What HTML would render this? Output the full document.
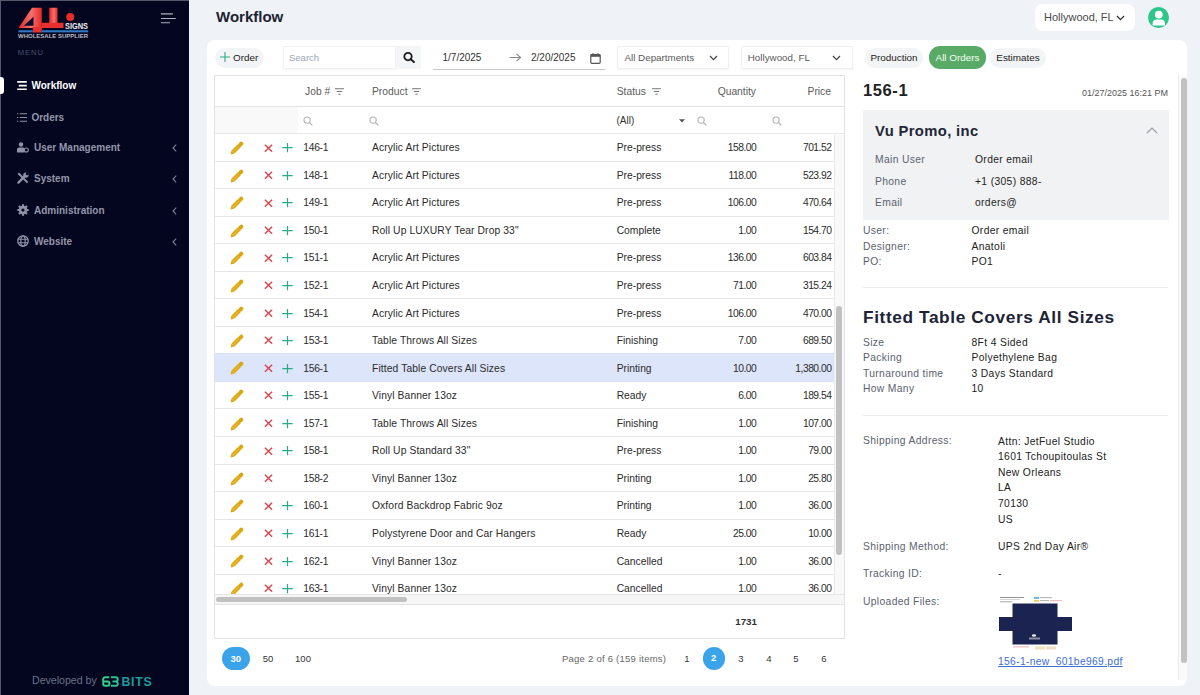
<!DOCTYPE html>
<html><head><meta charset="utf-8"><title>Workflow</title>
<style>
*{box-sizing:border-box;margin:0;padding:0}
html,body{width:1200px;height:695px;overflow:hidden}
body{background:#eff2f7;font-family:"Liberation Sans",sans-serif;position:relative;color:#2a2a2a}
.abs{position:absolute}
/* sidebar */
#sb{position:absolute;left:0;top:0;width:189px;height:695px;background:#04061f;border-left:1px solid #55576b;border-top:1px solid #55576b}
#sb .logo{position:absolute}
#sb .ham{position:absolute;left:159px;top:10.5px}
#sb .menu{position:absolute;left:16.8px;top:47.3px;font-size:7.6px;letter-spacing:0.95px;color:#4b4e72}
.nav{position:absolute;left:0;height:18px;width:189px;font-size:10px;color:#9496ab;font-weight:bold;line-height:18px}
.nav .t{position:absolute;left:30.4px;top:0}
.nav .i{position:absolute;left:16px;top:4px}
.nav .ch{position:absolute;left:171px;top:5px}
.nav.act{color:#fff}
.nav.act .bar{position:absolute;left:-1px;top:0;width:3.5px;height:17px;background:#fff;border-radius:0 3px 3px 0}
#dev{position:absolute;left:31px;top:673px;font-size:10.6px;color:#6e7187;white-space:nowrap}
/* header */
#title{position:absolute;left:216px;top:8px;font-size:15px;font-weight:bold;color:#1d2230}
#loc{position:absolute;left:1035px;top:4px;width:100px;height:27px;background:#fff;border-radius:7px;box-shadow:0 0 1px rgba(0,0,0,.06)}
#loc .t{position:absolute;left:9px;top:7px;font-size:11px;color:#4a4a4a}
#loc svg{position:absolute;left:81px;top:11px}
#av{position:absolute;left:1147.5px;top:6.5px;width:21.5px;height:21.5px;border-radius:50%;background:#2dc68b;overflow:hidden}
/* card */
#card{position:absolute;left:207px;top:40px;width:980px;height:646px;background:#fff;border-radius:8px}
/* toolbar */
.pill{position:absolute;top:47.5px;height:20.5px;border-radius:11px;background:#f3f4f6;font-size:9.9px;color:#222;line-height:20.5px;text-align:center}
#search{position:absolute;left:283px;top:46px;width:113px;height:23px;background:#fff;border:1px solid #f0f0f2;border-radius:2px;box-shadow:0 1px 2px rgba(0,0,0,.04)}
#search .t{position:absolute;left:5px;top:4.8px;font-size:9.5px;color:#9ba6ba}
#sbtn{position:absolute;left:396px;top:46px;width:25px;height:23px;background:#f4f5f7}
#dates{position:absolute;left:433px;top:46px;width:172px;height:23.5px;border-bottom:1.3px solid #c9c9c9}
#dates .t{position:absolute;top:6px;font-size:10px;color:#333}
.dd{position:absolute;top:46px;height:23px;background:#fff;border:1px solid #eeeff2;border-radius:2px;box-shadow:0 1px 2px rgba(0,0,0,.04)}
.dd .t{position:absolute;left:7px;top:5.2px;font-size:9.8px;color:#5a5a5a}
.dd svg{position:absolute;top:8px}
/* table */
#tbl{position:absolute;left:213.5px;top:75px;width:631.5px;height:564px;border:1px solid #e3e3e3;overflow:hidden;background:#fff}
#thead{position:absolute;left:0;top:0;width:100%;height:31px;border-bottom:1px solid #e3e3e3}
#thead span{position:absolute;top:9.5px;font-size:10.3px;color:#5b5b5b}
#thead svg{position:absolute;top:12px}
#tfilt{position:absolute;left:0;top:31px;width:100%;height:27px;border-bottom:1px solid #e8e8e8}
#tfilt .g{position:absolute;left:0;top:0;width:83px;height:26px;background:#f9f9f9}
#tfilt svg{position:absolute;top:9px}
#tfilt .all{position:absolute;left:402px;top:7.5px;font-size:10px;color:#333}
.rows{position:absolute;left:0;top:0;width:619px;height:593px}
.row{position:absolute;left:0;width:619px;height:27.5px;border-bottom:1px solid #e6e6e6;font-size:10.3px;color:#2b2b2b;background:#fff}
.row.sel{background:#dce5f9;border-bottom-color:#d9e3f7;box-shadow:0 -1px 0 #d6e0f4,0 1px 0 #dfe7f9}
.row span{position:absolute;top:8.3px;white-space:nowrap}
.row .ic-pen{left:15.2px;top:7px;line-height:0}
.row .ic-x{left:49.8px;top:9.5px;line-height:0}
.row .ic-pl{left:67.5px;top:9.3px;line-height:0}
.row .c-job{left:88.8px;letter-spacing:-0.3px}
.row .c-prod{left:157.5px;letter-spacing:0.1px}
.row .c-st{left:402.2px}
.row .c-qty{right:77.3px;letter-spacing:-0.5px}
.row .c-pr{right:2.1px;letter-spacing:-0.5px}
#vtrack{position:absolute;left:619px;top:59px;width:12px;height:459px;background:#f9f9f9;border-left:1px solid #e9e9e9}
#vthumb{position:absolute;left:621.9px;top:229.6px;width:5.5px;height:249px;border-radius:3px;background:#c1c1c1}
#htrack{position:absolute;left:0;top:517.5px;width:631px;height:11px;background:#f6f6f6;border-top:1px solid #e6e6e6;border-bottom:1px solid #e3e3e3}
#hthumb{position:absolute;left:1.8px;top:520.6px;width:191px;height:5.5px;border-radius:3px;background:#c1c1c1}
#tfoot{position:absolute;left:0;top:529px;width:100%;height:34px}
#tfoot .t{position:absolute;right:87px;top:11px;font-size:9.8px;font-weight:bold;color:#333}
/* pager */
.pg{position:absolute;top:647px;height:23px;font-size:9.5px;color:#333;line-height:23px;text-align:center}
.pg.on{background:#3aa3e9;color:#fff;border-radius:50%;font-weight:bold}
/* detail */
#det{position:absolute;left:852px;top:75px;width:335px;height:605px;overflow:hidden}
#det .h1{position:absolute;left:11px;top:6px;font-size:16.5px;letter-spacing:0.6px;font-weight:bold;color:#222}
#det .date{position:absolute;right:19px;top:13px;font-size:9px;color:#555}
#cust{position:absolute;left:11px;top:35px;width:305.5px;height:109.5px;background:#f1f2f3}
#cust .n{position:absolute;left:12px;top:12.5px;font-size:14.8px;letter-spacing:0.35px;font-weight:bold;color:#1f2637}
.kv{position:absolute;font-size:10.3px;letter-spacing:0.35px;white-space:nowrap}
.kv .k{position:absolute;left:0;color:#5b6270}
.kv .v{position:absolute;color:#222}
.sep{position:absolute;left:11px;width:305px;height:1px;background:#ececec}
#dscroll{position:absolute;left:1178px;top:75px;width:9px;height:605px;border-left:1px solid #ececec;background:#fafafa}
#dthumb{position:absolute;left:1181px;top:78px;width:5.5px;height:585px;border-radius:3px;background:#c1c1c1}

</style></head>
<body>
<div id="sb">
  <svg class="logo" width="74" height="34" viewBox="0 0 74 34" style="left:16px;top:4px">
    <defs><linearGradient id="rg" x1="0" x2="1" y1="0" y2="0"><stop offset="0" stop-color="#e8231f"/><stop offset="0.55" stop-color="#f47070"/><stop offset="1" stop-color="#e82a25"/></linearGradient></defs>
    <polygon points="1.5,23 15,2.75 24.75,2.75 24.75,23" fill="url(#rg)"/>
    <polygon points="6.75,20.75 16.5,11.75 16.5,20.75" fill="#0b0d2a"/>
    <rect x="15.75" y="22" width="9" height="5.5" fill="#e8302f"/>
    <rect x="32.25" y="2.75" width="8.25" height="20.25" fill="url(#rg)"/>
    <rect x="24.75" y="17.75" width="21.75" height="5.25" fill="#e8302f"/>
    <circle cx="53.25" cy="12.1" r="4" fill="#e82c2a"/>
    <text x="48" y="23.75" font-size="9.3" font-weight="bold" fill="#eceef3" font-family="Liberation Sans" textLength="23" lengthAdjust="spacingAndGlyphs">SIGNS</text>
    <rect x="1.5" y="25.25" width="14.25" height="2.1" fill="#2f78c4"/>
    <rect x="24.75" y="25.25" width="46.5" height="2.1" fill="#2f78c4"/>
    <text x="1" y="32.6" font-size="5.6" font-weight="bold" fill="#b9bdc8" font-family="Liberation Sans" textLength="70" lengthAdjust="spacingAndGlyphs">WHOLESALE SUPPLIER</text>
  </svg>
  <svg class="ham" width="17" height="12" viewBox="0 0 17 12"><path d="M1 1.9 H12.9 M1 6.5 H15.8 M1 10.8 H10" stroke="#aeb0be" stroke-width="1.1"/></svg>
  <div class="menu">MENU</div>
  <div class="nav act" style="top:76px"><span class="bar"></span>
    <svg class="i" width="11" height="10" viewBox="0 0 11 10" style="left:16px;top:4.2px"><path d="M0.2 0.9 H9.8 M1.8 4.6 H9.8 M0.2 8.3 H9.8" stroke="#fff" stroke-width="1.6"/></svg>
    <span class="t">Workflow</span></div>
  <div class="nav" style="top:107.5px">
    <svg class="i" width="11" height="10" viewBox="0 0 11 10" style="left:16px;top:4.3px"><path d="M0 0.8 H1.3 M2.8 0.8 H10 M0 4.5 H1.3 M2.8 4.5 H10 M0 8.2 H1.3 M2.8 8.2 H10" stroke="#8f92a7" stroke-width="1.1"/></svg>
    <span class="t">Orders</span></div>
  <div class="nav" style="top:138px">
    <svg class="i" width="12" height="11" viewBox="0 0 12 11" style="top:2.6px"><circle cx="4" cy="2.5" r="2.2" fill="#8f92a7"/><path d="M0 10.5 V7.5 Q0 5.6 2 5.6 H6 Q7.5 5.6 7.5 7 V10.5 Z" fill="#8f92a7"/><circle cx="9.3" cy="8" r="2" fill="none" stroke="#8f92a7" stroke-width="1.1"/></svg>
    <span class="t" style="left:33px">User Management</span>
    <svg class="ch" width="5" height="8" viewBox="0 0 5 8"><path d="M4.2 0.7 L1 4 L4.2 7.3" fill="none" stroke="#7d8096" stroke-width="1.1"/></svg></div>
  <div class="nav" style="top:169px">
    <svg class="i" width="12" height="12" viewBox="0 0 12 12" style="top:2.3px"><path d="M1.3 1.3 L10.6 10.6" stroke="#8f92a7" stroke-width="2"/><path d="M1.4 10.6 L7.6 4.4" stroke="#8f92a7" stroke-width="2.3" stroke-linecap="round"/><circle cx="8.9" cy="3.1" r="2.7" fill="#8f92a7"/><circle cx="10.2" cy="1.8" r="1.5" fill="#04061f"/></svg>
    <span class="t" style="left:33px">System</span>
    <svg class="ch" width="5" height="8" viewBox="0 0 5 8"><path d="M4.2 0.7 L1 4 L4.2 7.3" fill="none" stroke="#7d8096" stroke-width="1.1"/></svg></div>
  <div class="nav" style="top:200.5px">
    <svg class="i" width="12" height="12" viewBox="0 0 12 12" style="top:2.3px"><circle cx="6" cy="6" r="4.2" fill="#8f92a7"/><path d="M6 0.3 V11.7 M0.3 6 H11.7 M2 2 L10 10 M10 2 L2 10" stroke="#8f92a7" stroke-width="2.2"/><circle cx="6" cy="6" r="1.6" fill="#04061f"/></svg>
    <span class="t" style="left:33px">Administration</span>
    <svg class="ch" width="5" height="8" viewBox="0 0 5 8"><path d="M4.2 0.7 L1 4 L4.2 7.3" fill="none" stroke="#7d8096" stroke-width="1.1"/></svg></div>
  <div class="nav" style="top:231.5px">
    <svg class="i" width="12" height="12" viewBox="0 0 12 12" style="top:2.3px"><circle cx="6" cy="6" r="5.2" fill="none" stroke="#8f92a7" stroke-width="1.3"/><ellipse cx="6" cy="6" rx="2.2" ry="5.2" fill="none" stroke="#8f92a7" stroke-width="1.2"/><path d="M0.8 4.2 H11.2 M0.8 7.8 H11.2" stroke="#8f92a7" stroke-width="1.1"/></svg>
    <span class="t" style="left:33px">Website</span>
    <svg class="ch" width="5" height="8" viewBox="0 0 5 8"><path d="M4.2 0.7 L1 4 L4.2 7.3" fill="none" stroke="#7d8096" stroke-width="1.1"/></svg></div>
  <div id="dev">Developed by <svg width="17" height="11" viewBox="0 0 17 11" style="position:absolute;left:70px;top:2px"><path d="M7.2 1.3 H3.2 Q1.2 1.3 1.2 3.3 V7.7 Q1.2 9.7 3.2 9.7 H5.5 Q7.5 9.7 7.5 7.7 Q7.5 5.5 5.5 5.5 H1.5" fill="none" stroke="#2fcf8e" stroke-width="1.9"/><path d="M9 1.3 H13.8 Q15.8 1.3 15.8 3.3 Q15.8 5.5 13.6 5.5 H10.5 M13.6 5.5 Q15.8 5.5 15.8 7.7 Q15.8 9.7 13.8 9.7 H9" fill="none" stroke="#2bc18f" stroke-width="1.9"/></svg><span style="position:absolute;left:89.5px;top:0.8px;color:#1f9c9a;font-size:12.3px;font-weight:bold;letter-spacing:0.7px">BITS</span></div>
</div>

<div id="title">Workflow</div>
<div id="loc"><span class="t">Hollywood, FL</span><svg width="9" height="6" viewBox="0 0 9 6"><path d="M1 1 L4.5 4.6 L8 1" fill="none" stroke="#333" stroke-width="1.3"/></svg></div>
<div id="av"><svg width="22" height="22" viewBox="0 0 22 22"><circle cx="10.8" cy="7.6" r="3.9" fill="#fff"/><path d="M4.6 18.6 V16.6 Q4.6 13.2 8.2 12.6 H13.4 Q17 13.2 17 16.6 V18.6 Z" fill="#fff"/></svg></div>

<div id="card"></div>

<div class="pill" style="left:215px;top:47.5px;width:48.5px;text-align:left"><svg width="10" height="10" viewBox="0 0 10 10" style="position:absolute;left:5px;top:4.3px"><path d="M5 0 V10 M0 5 H10" stroke="#2bac85" stroke-width="1.1"/></svg><span style="position:absolute;left:18px">Order</span></div>
<div id="search"><span class="t">Search</span></div>
<div id="sbtn"><svg width="13" height="11" viewBox="0 0 13 11" style="position:absolute;left:7px;top:6.3px"><circle cx="5" cy="4.6" r="3.7" fill="none" stroke="#1e1e1e" stroke-width="1.8"/><path d="M7.7 7.3 L10.9 10" stroke="#1e1e1e" stroke-width="2" stroke-linecap="round"/></svg></div>
<div id="dates"><span class="t" style="left:9.5px">1/7/2025</span>
  <svg width="13" height="9" viewBox="0 0 13 9" style="position:absolute;left:75.5px;top:7px"><path d="M0.5 4.5 H11.5 M7.5 0.8 L11.5 4.5 L7.5 8.2" fill="none" stroke="#8a8a8a" stroke-width="1.1"/></svg>
  <span class="t" style="left:98px">2/20/2025</span>
  <svg width="11" height="11" viewBox="0 0 11 11" style="position:absolute;left:157px;top:6.5px"><rect x="0.8" y="1.5" width="9.4" height="8.8" rx="1" fill="none" stroke="#555" stroke-width="1.2"/><rect x="0.8" y="1.5" width="9.4" height="2.3" fill="#555"/><path d="M3 0 V2 M8 0 V2" stroke="#555" stroke-width="1"/></svg></div>
<div class="dd" style="left:616.5px;width:112.5px"><span class="t">All Departments</span><svg width="9" height="6" viewBox="0 0 9 6" style="left:91px"><path d="M1 1 L4.5 4.6 L8 1" fill="none" stroke="#444" stroke-width="1.3"/></svg></div>
<div class="dd" style="left:741px;width:111.5px"><span class="t" style="left:5.8px">Hollywood, FL</span><svg width="9" height="6" viewBox="0 0 9 6" style="left:90px"><path d="M1 1 L4.5 4.6 L8 1" fill="none" stroke="#444" stroke-width="1.3"/></svg></div>
<div class="pill" style="left:865px;width:58px">Production</div>
<div class="pill" style="left:929px;top:46px;height:23px;width:57px;background:#5aaa67;color:#f4fff6;line-height:23px">All Orders</div>
<div class="pill" style="left:990px;width:56px">Estimates</div>

<div id="tbl">
  <div id="thead">
    <span style="left:90.5px">Job #</span><svg width="9" height="7" viewBox="0 0 9 7" style="left:120px"><path d="M0 0.7 H9 M1.8 3.5 H7.2 M3.4 6.3 H5.6" stroke="#777" stroke-width="1.1"/></svg>
    <span style="left:157.5px">Product</span><svg width="9" height="7" viewBox="0 0 9 7" style="left:197.5px"><path d="M0 0.7 H9 M1.8 3.5 H7.2 M3.4 6.3 H5.6" stroke="#777" stroke-width="1.1"/></svg>
    <span style="left:402.2px">Status</span><svg width="9" height="7" viewBox="0 0 9 7" style="left:437px"><path d="M0 0.7 H9 M1.8 3.5 H7.2 M3.4 6.3 H5.6" stroke="#777" stroke-width="1.1"/></svg>
    <span style="right:88px">Quantity</span>
    <span style="right:13px">Price</span>
  </div>
  <div id="tfilt"><div class="g"></div>
    <span class="all">(All)</span>
    <svg width="10" height="10" viewBox="0 0 9 9" style="left:88px;top:8.5px"><circle cx="3.7" cy="3.7" r="2.8" fill="none" stroke="#b4b4b4" stroke-width="1"/><path d="M5.8 5.8 L8.4 8.4" stroke="#b4b4b4" stroke-width="1.1"/></svg>
    <svg width="10" height="10" viewBox="0 0 9 9" style="left:154px;top:8.5px"><circle cx="3.7" cy="3.7" r="2.8" fill="none" stroke="#b4b4b4" stroke-width="1"/><path d="M5.8 5.8 L8.4 8.4" stroke="#b4b4b4" stroke-width="1.1"/></svg>
    <svg width="10" height="10" viewBox="0 0 9 9" style="left:482.5px;top:8.5px"><circle cx="3.7" cy="3.7" r="2.8" fill="none" stroke="#b4b4b4" stroke-width="1"/><path d="M5.8 5.8 L8.4 8.4" stroke="#b4b4b4" stroke-width="1.1"/></svg>
    <svg width="10" height="10" viewBox="0 0 9 9" style="left:557.5px;top:8.5px"><circle cx="3.7" cy="3.7" r="2.8" fill="none" stroke="#b4b4b4" stroke-width="1"/><path d="M5.8 5.8 L8.4 8.4" stroke="#b4b4b4" stroke-width="1.1"/></svg>
    <svg width="6" height="4" viewBox="0 0 6 4" style="left:464.5px;top:12px"><path d="M0 0.3 H6 L3 3.5 Z" fill="#555"/></svg>
  </div>
  <div class="rows">
<div class="row" style="top:58.00px"><span class="ic-pen"><svg width="14" height="14" viewBox="0 0 14 14"><path d="M1.5 9.5 L8 3 L11 6 L4.5 12.5 Z" fill="#e0aa14"/><path d="M1.5 9.5 L4.5 12.5 L0.5 13.5 Z" fill="#d9a717"/><path d="M10.5 3.5 L11.3 2.7" stroke="#d8a90f" stroke-width="4" stroke-linecap="round"/><path d="M3.4 10.6 L8.9 5.1" stroke="#f3d27a" stroke-width="0.8" opacity="0.55"/></svg></span><span class="ic-x"><svg width="9" height="9" viewBox="0 0 9 9"><path d="M0.9 0.7 L8.1 7.7 M8.1 0.7 L0.9 7.7" stroke="#d9464e" stroke-width="1.45"/></svg></span><span class="ic-pl"><svg width="11" height="10" viewBox="0 0 11 10"><path d="M5.5 0 V9.2 M0.3 4.6 H10.7" stroke="#2aaa84" stroke-width="1.2"/></svg></span><span class="c-job">146-1</span><span class="c-prod">Acrylic Art Pictures</span><span class="c-st">Pre-press</span><span class="c-qty">158.00</span><span class="c-pr">701.52</span></div>
<div class="row" style="top:85.55px"><span class="ic-pen"><svg width="14" height="14" viewBox="0 0 14 14"><path d="M1.5 9.5 L8 3 L11 6 L4.5 12.5 Z" fill="#e0aa14"/><path d="M1.5 9.5 L4.5 12.5 L0.5 13.5 Z" fill="#d9a717"/><path d="M10.5 3.5 L11.3 2.7" stroke="#d8a90f" stroke-width="4" stroke-linecap="round"/><path d="M3.4 10.6 L8.9 5.1" stroke="#f3d27a" stroke-width="0.8" opacity="0.55"/></svg></span><span class="ic-x"><svg width="9" height="9" viewBox="0 0 9 9"><path d="M0.9 0.7 L8.1 7.7 M8.1 0.7 L0.9 7.7" stroke="#d9464e" stroke-width="1.45"/></svg></span><span class="ic-pl"><svg width="11" height="10" viewBox="0 0 11 10"><path d="M5.5 0 V9.2 M0.3 4.6 H10.7" stroke="#2aaa84" stroke-width="1.2"/></svg></span><span class="c-job">148-1</span><span class="c-prod">Acrylic Art Pictures</span><span class="c-st">Pre-press</span><span class="c-qty">118.00</span><span class="c-pr">523.92</span></div>
<div class="row" style="top:113.10px"><span class="ic-pen"><svg width="14" height="14" viewBox="0 0 14 14"><path d="M1.5 9.5 L8 3 L11 6 L4.5 12.5 Z" fill="#e0aa14"/><path d="M1.5 9.5 L4.5 12.5 L0.5 13.5 Z" fill="#d9a717"/><path d="M10.5 3.5 L11.3 2.7" stroke="#d8a90f" stroke-width="4" stroke-linecap="round"/><path d="M3.4 10.6 L8.9 5.1" stroke="#f3d27a" stroke-width="0.8" opacity="0.55"/></svg></span><span class="ic-x"><svg width="9" height="9" viewBox="0 0 9 9"><path d="M0.9 0.7 L8.1 7.7 M8.1 0.7 L0.9 7.7" stroke="#d9464e" stroke-width="1.45"/></svg></span><span class="ic-pl"><svg width="11" height="10" viewBox="0 0 11 10"><path d="M5.5 0 V9.2 M0.3 4.6 H10.7" stroke="#2aaa84" stroke-width="1.2"/></svg></span><span class="c-job">149-1</span><span class="c-prod">Acrylic Art Pictures</span><span class="c-st">Pre-press</span><span class="c-qty">106.00</span><span class="c-pr">470.64</span></div>
<div class="row" style="top:140.65px"><span class="ic-pen"><svg width="14" height="14" viewBox="0 0 14 14"><path d="M1.5 9.5 L8 3 L11 6 L4.5 12.5 Z" fill="#e0aa14"/><path d="M1.5 9.5 L4.5 12.5 L0.5 13.5 Z" fill="#d9a717"/><path d="M10.5 3.5 L11.3 2.7" stroke="#d8a90f" stroke-width="4" stroke-linecap="round"/><path d="M3.4 10.6 L8.9 5.1" stroke="#f3d27a" stroke-width="0.8" opacity="0.55"/></svg></span><span class="ic-x"><svg width="9" height="9" viewBox="0 0 9 9"><path d="M0.9 0.7 L8.1 7.7 M8.1 0.7 L0.9 7.7" stroke="#d9464e" stroke-width="1.45"/></svg></span><span class="ic-pl"><svg width="11" height="10" viewBox="0 0 11 10"><path d="M5.5 0 V9.2 M0.3 4.6 H10.7" stroke="#2aaa84" stroke-width="1.2"/></svg></span><span class="c-job">150-1</span><span class="c-prod">Roll Up LUXURY Tear Drop 33&quot;</span><span class="c-st">Complete</span><span class="c-qty">1.00</span><span class="c-pr">154.70</span></div>
<div class="row" style="top:168.20px"><span class="ic-pen"><svg width="14" height="14" viewBox="0 0 14 14"><path d="M1.5 9.5 L8 3 L11 6 L4.5 12.5 Z" fill="#e0aa14"/><path d="M1.5 9.5 L4.5 12.5 L0.5 13.5 Z" fill="#d9a717"/><path d="M10.5 3.5 L11.3 2.7" stroke="#d8a90f" stroke-width="4" stroke-linecap="round"/><path d="M3.4 10.6 L8.9 5.1" stroke="#f3d27a" stroke-width="0.8" opacity="0.55"/></svg></span><span class="ic-x"><svg width="9" height="9" viewBox="0 0 9 9"><path d="M0.9 0.7 L8.1 7.7 M8.1 0.7 L0.9 7.7" stroke="#d9464e" stroke-width="1.45"/></svg></span><span class="ic-pl"><svg width="11" height="10" viewBox="0 0 11 10"><path d="M5.5 0 V9.2 M0.3 4.6 H10.7" stroke="#2aaa84" stroke-width="1.2"/></svg></span><span class="c-job">151-1</span><span class="c-prod">Acrylic Art Pictures</span><span class="c-st">Pre-press</span><span class="c-qty">136.00</span><span class="c-pr">603.84</span></div>
<div class="row" style="top:195.75px"><span class="ic-pen"><svg width="14" height="14" viewBox="0 0 14 14"><path d="M1.5 9.5 L8 3 L11 6 L4.5 12.5 Z" fill="#e0aa14"/><path d="M1.5 9.5 L4.5 12.5 L0.5 13.5 Z" fill="#d9a717"/><path d="M10.5 3.5 L11.3 2.7" stroke="#d8a90f" stroke-width="4" stroke-linecap="round"/><path d="M3.4 10.6 L8.9 5.1" stroke="#f3d27a" stroke-width="0.8" opacity="0.55"/></svg></span><span class="ic-x"><svg width="9" height="9" viewBox="0 0 9 9"><path d="M0.9 0.7 L8.1 7.7 M8.1 0.7 L0.9 7.7" stroke="#d9464e" stroke-width="1.45"/></svg></span><span class="ic-pl"><svg width="11" height="10" viewBox="0 0 11 10"><path d="M5.5 0 V9.2 M0.3 4.6 H10.7" stroke="#2aaa84" stroke-width="1.2"/></svg></span><span class="c-job">152-1</span><span class="c-prod">Acrylic Art Pictures</span><span class="c-st">Pre-press</span><span class="c-qty">71.00</span><span class="c-pr">315.24</span></div>
<div class="row" style="top:223.30px"><span class="ic-pen"><svg width="14" height="14" viewBox="0 0 14 14"><path d="M1.5 9.5 L8 3 L11 6 L4.5 12.5 Z" fill="#e0aa14"/><path d="M1.5 9.5 L4.5 12.5 L0.5 13.5 Z" fill="#d9a717"/><path d="M10.5 3.5 L11.3 2.7" stroke="#d8a90f" stroke-width="4" stroke-linecap="round"/><path d="M3.4 10.6 L8.9 5.1" stroke="#f3d27a" stroke-width="0.8" opacity="0.55"/></svg></span><span class="ic-x"><svg width="9" height="9" viewBox="0 0 9 9"><path d="M0.9 0.7 L8.1 7.7 M8.1 0.7 L0.9 7.7" stroke="#d9464e" stroke-width="1.45"/></svg></span><span class="ic-pl"><svg width="11" height="10" viewBox="0 0 11 10"><path d="M5.5 0 V9.2 M0.3 4.6 H10.7" stroke="#2aaa84" stroke-width="1.2"/></svg></span><span class="c-job">154-1</span><span class="c-prod">Acrylic Art Pictures</span><span class="c-st">Pre-press</span><span class="c-qty">106.00</span><span class="c-pr">470.00</span></div>
<div class="row" style="top:250.85px"><span class="ic-pen"><svg width="14" height="14" viewBox="0 0 14 14"><path d="M1.5 9.5 L8 3 L11 6 L4.5 12.5 Z" fill="#e0aa14"/><path d="M1.5 9.5 L4.5 12.5 L0.5 13.5 Z" fill="#d9a717"/><path d="M10.5 3.5 L11.3 2.7" stroke="#d8a90f" stroke-width="4" stroke-linecap="round"/><path d="M3.4 10.6 L8.9 5.1" stroke="#f3d27a" stroke-width="0.8" opacity="0.55"/></svg></span><span class="ic-x"><svg width="9" height="9" viewBox="0 0 9 9"><path d="M0.9 0.7 L8.1 7.7 M8.1 0.7 L0.9 7.7" stroke="#d9464e" stroke-width="1.45"/></svg></span><span class="ic-pl"><svg width="11" height="10" viewBox="0 0 11 10"><path d="M5.5 0 V9.2 M0.3 4.6 H10.7" stroke="#2aaa84" stroke-width="1.2"/></svg></span><span class="c-job">153-1</span><span class="c-prod">Table Throws All Sizes</span><span class="c-st">Finishing</span><span class="c-qty">7.00</span><span class="c-pr">689.50</span></div>
<div class="row sel" style="top:278.40px"><span class="ic-pen"><svg width="14" height="14" viewBox="0 0 14 14"><path d="M1.5 9.5 L8 3 L11 6 L4.5 12.5 Z" fill="#e0aa14"/><path d="M1.5 9.5 L4.5 12.5 L0.5 13.5 Z" fill="#d9a717"/><path d="M10.5 3.5 L11.3 2.7" stroke="#d8a90f" stroke-width="4" stroke-linecap="round"/><path d="M3.4 10.6 L8.9 5.1" stroke="#f3d27a" stroke-width="0.8" opacity="0.55"/></svg></span><span class="ic-x"><svg width="9" height="9" viewBox="0 0 9 9"><path d="M0.9 0.7 L8.1 7.7 M8.1 0.7 L0.9 7.7" stroke="#d9464e" stroke-width="1.45"/></svg></span><span class="ic-pl"><svg width="11" height="10" viewBox="0 0 11 10"><path d="M5.5 0 V9.2 M0.3 4.6 H10.7" stroke="#2aaa84" stroke-width="1.2"/></svg></span><span class="c-job">156-1</span><span class="c-prod">Fitted Table Covers All Sizes</span><span class="c-st">Printing</span><span class="c-qty">10.00</span><span class="c-pr">1,380.00</span></div>
<div class="row" style="top:305.95px"><span class="ic-pen"><svg width="14" height="14" viewBox="0 0 14 14"><path d="M1.5 9.5 L8 3 L11 6 L4.5 12.5 Z" fill="#e0aa14"/><path d="M1.5 9.5 L4.5 12.5 L0.5 13.5 Z" fill="#d9a717"/><path d="M10.5 3.5 L11.3 2.7" stroke="#d8a90f" stroke-width="4" stroke-linecap="round"/><path d="M3.4 10.6 L8.9 5.1" stroke="#f3d27a" stroke-width="0.8" opacity="0.55"/></svg></span><span class="ic-x"><svg width="9" height="9" viewBox="0 0 9 9"><path d="M0.9 0.7 L8.1 7.7 M8.1 0.7 L0.9 7.7" stroke="#d9464e" stroke-width="1.45"/></svg></span><span class="ic-pl"><svg width="11" height="10" viewBox="0 0 11 10"><path d="M5.5 0 V9.2 M0.3 4.6 H10.7" stroke="#2aaa84" stroke-width="1.2"/></svg></span><span class="c-job">155-1</span><span class="c-prod">Vinyl Banner 13oz</span><span class="c-st">Ready</span><span class="c-qty">6.00</span><span class="c-pr">189.54</span></div>
<div class="row" style="top:333.50px"><span class="ic-pen"><svg width="14" height="14" viewBox="0 0 14 14"><path d="M1.5 9.5 L8 3 L11 6 L4.5 12.5 Z" fill="#e0aa14"/><path d="M1.5 9.5 L4.5 12.5 L0.5 13.5 Z" fill="#d9a717"/><path d="M10.5 3.5 L11.3 2.7" stroke="#d8a90f" stroke-width="4" stroke-linecap="round"/><path d="M3.4 10.6 L8.9 5.1" stroke="#f3d27a" stroke-width="0.8" opacity="0.55"/></svg></span><span class="ic-x"><svg width="9" height="9" viewBox="0 0 9 9"><path d="M0.9 0.7 L8.1 7.7 M8.1 0.7 L0.9 7.7" stroke="#d9464e" stroke-width="1.45"/></svg></span><span class="ic-pl"><svg width="11" height="10" viewBox="0 0 11 10"><path d="M5.5 0 V9.2 M0.3 4.6 H10.7" stroke="#2aaa84" stroke-width="1.2"/></svg></span><span class="c-job">157-1</span><span class="c-prod">Table Throws All Sizes</span><span class="c-st">Finishing</span><span class="c-qty">1.00</span><span class="c-pr">107.00</span></div>
<div class="row" style="top:361.05px"><span class="ic-pen"><svg width="14" height="14" viewBox="0 0 14 14"><path d="M1.5 9.5 L8 3 L11 6 L4.5 12.5 Z" fill="#e0aa14"/><path d="M1.5 9.5 L4.5 12.5 L0.5 13.5 Z" fill="#d9a717"/><path d="M10.5 3.5 L11.3 2.7" stroke="#d8a90f" stroke-width="4" stroke-linecap="round"/><path d="M3.4 10.6 L8.9 5.1" stroke="#f3d27a" stroke-width="0.8" opacity="0.55"/></svg></span><span class="ic-x"><svg width="9" height="9" viewBox="0 0 9 9"><path d="M0.9 0.7 L8.1 7.7 M8.1 0.7 L0.9 7.7" stroke="#d9464e" stroke-width="1.45"/></svg></span><span class="ic-pl"><svg width="11" height="10" viewBox="0 0 11 10"><path d="M5.5 0 V9.2 M0.3 4.6 H10.7" stroke="#2aaa84" stroke-width="1.2"/></svg></span><span class="c-job">158-1</span><span class="c-prod">Roll Up Standard 33&quot;</span><span class="c-st">Pre-press</span><span class="c-qty">1.00</span><span class="c-pr">79.00</span></div>
<div class="row" style="top:388.60px"><span class="ic-pen"><svg width="14" height="14" viewBox="0 0 14 14"><path d="M1.5 9.5 L8 3 L11 6 L4.5 12.5 Z" fill="#e0aa14"/><path d="M1.5 9.5 L4.5 12.5 L0.5 13.5 Z" fill="#d9a717"/><path d="M10.5 3.5 L11.3 2.7" stroke="#d8a90f" stroke-width="4" stroke-linecap="round"/><path d="M3.4 10.6 L8.9 5.1" stroke="#f3d27a" stroke-width="0.8" opacity="0.55"/></svg></span><span class="ic-x"><svg width="9" height="9" viewBox="0 0 9 9"><path d="M0.9 0.7 L8.1 7.7 M8.1 0.7 L0.9 7.7" stroke="#d9464e" stroke-width="1.45"/></svg></span><span class="c-job">158-2</span><span class="c-prod">Vinyl Banner 13oz</span><span class="c-st">Printing</span><span class="c-qty">1.00</span><span class="c-pr">25.80</span></div>
<div class="row" style="top:416.15px"><span class="ic-pen"><svg width="14" height="14" viewBox="0 0 14 14"><path d="M1.5 9.5 L8 3 L11 6 L4.5 12.5 Z" fill="#e0aa14"/><path d="M1.5 9.5 L4.5 12.5 L0.5 13.5 Z" fill="#d9a717"/><path d="M10.5 3.5 L11.3 2.7" stroke="#d8a90f" stroke-width="4" stroke-linecap="round"/><path d="M3.4 10.6 L8.9 5.1" stroke="#f3d27a" stroke-width="0.8" opacity="0.55"/></svg></span><span class="ic-x"><svg width="9" height="9" viewBox="0 0 9 9"><path d="M0.9 0.7 L8.1 7.7 M8.1 0.7 L0.9 7.7" stroke="#d9464e" stroke-width="1.45"/></svg></span><span class="ic-pl"><svg width="11" height="10" viewBox="0 0 11 10"><path d="M5.5 0 V9.2 M0.3 4.6 H10.7" stroke="#2aaa84" stroke-width="1.2"/></svg></span><span class="c-job">160-1</span><span class="c-prod">Oxford Backdrop Fabric 9oz</span><span class="c-st">Printing</span><span class="c-qty">1.00</span><span class="c-pr">36.00</span></div>
<div class="row" style="top:443.70px"><span class="ic-pen"><svg width="14" height="14" viewBox="0 0 14 14"><path d="M1.5 9.5 L8 3 L11 6 L4.5 12.5 Z" fill="#e0aa14"/><path d="M1.5 9.5 L4.5 12.5 L0.5 13.5 Z" fill="#d9a717"/><path d="M10.5 3.5 L11.3 2.7" stroke="#d8a90f" stroke-width="4" stroke-linecap="round"/><path d="M3.4 10.6 L8.9 5.1" stroke="#f3d27a" stroke-width="0.8" opacity="0.55"/></svg></span><span class="ic-x"><svg width="9" height="9" viewBox="0 0 9 9"><path d="M0.9 0.7 L8.1 7.7 M8.1 0.7 L0.9 7.7" stroke="#d9464e" stroke-width="1.45"/></svg></span><span class="ic-pl"><svg width="11" height="10" viewBox="0 0 11 10"><path d="M5.5 0 V9.2 M0.3 4.6 H10.7" stroke="#2aaa84" stroke-width="1.2"/></svg></span><span class="c-job">161-1</span><span class="c-prod">Polystyrene Door and Car Hangers</span><span class="c-st">Ready</span><span class="c-qty">25.00</span><span class="c-pr">10.00</span></div>
<div class="row" style="top:471.25px"><span class="ic-pen"><svg width="14" height="14" viewBox="0 0 14 14"><path d="M1.5 9.5 L8 3 L11 6 L4.5 12.5 Z" fill="#e0aa14"/><path d="M1.5 9.5 L4.5 12.5 L0.5 13.5 Z" fill="#d9a717"/><path d="M10.5 3.5 L11.3 2.7" stroke="#d8a90f" stroke-width="4" stroke-linecap="round"/><path d="M3.4 10.6 L8.9 5.1" stroke="#f3d27a" stroke-width="0.8" opacity="0.55"/></svg></span><span class="ic-x"><svg width="9" height="9" viewBox="0 0 9 9"><path d="M0.9 0.7 L8.1 7.7 M8.1 0.7 L0.9 7.7" stroke="#d9464e" stroke-width="1.45"/></svg></span><span class="ic-pl"><svg width="11" height="10" viewBox="0 0 11 10"><path d="M5.5 0 V9.2 M0.3 4.6 H10.7" stroke="#2aaa84" stroke-width="1.2"/></svg></span><span class="c-job">162-1</span><span class="c-prod">Vinyl Banner 13oz</span><span class="c-st">Cancelled</span><span class="c-qty">1.00</span><span class="c-pr">36.00</span></div>
<div class="row" style="top:498.80px"><span class="ic-pen"><svg width="14" height="14" viewBox="0 0 14 14"><path d="M1.5 9.5 L8 3 L11 6 L4.5 12.5 Z" fill="#e0aa14"/><path d="M1.5 9.5 L4.5 12.5 L0.5 13.5 Z" fill="#d9a717"/><path d="M10.5 3.5 L11.3 2.7" stroke="#d8a90f" stroke-width="4" stroke-linecap="round"/><path d="M3.4 10.6 L8.9 5.1" stroke="#f3d27a" stroke-width="0.8" opacity="0.55"/></svg></span><span class="ic-x"><svg width="9" height="9" viewBox="0 0 9 9"><path d="M0.9 0.7 L8.1 7.7 M8.1 0.7 L0.9 7.7" stroke="#d9464e" stroke-width="1.45"/></svg></span><span class="ic-pl"><svg width="11" height="10" viewBox="0 0 11 10"><path d="M5.5 0 V9.2 M0.3 4.6 H10.7" stroke="#2aaa84" stroke-width="1.2"/></svg></span><span class="c-job">163-1</span><span class="c-prod">Vinyl Banner 13oz</span><span class="c-st">Cancelled</span><span class="c-qty">1.00</span><span class="c-pr">36.00</span></div>
  </div>
  <div id="vtrack"></div>
  <div id="vthumb"></div>
  <div id="htrack"></div>
  <div id="hthumb"></div>
  <div id="tfoot"><span class="t">1731</span></div>
</div>

<div class="pg on" style="left:221.5px;width:28.5px;border-radius:12px">30</div>
<div class="pg" style="left:258px;width:20px">50</div>
<div class="pg" style="left:292px;width:22px">100</div>
<div class="pg" style="left:562px;width:110px;text-align:left;color:#666;letter-spacing:0.24px">Page 2 of 6 (159 items)</div>
<div class="pg" style="left:679px;width:16px">1</div>
<div class="pg on" style="left:702.5px;width:22.5px;height:22.5px;line-height:22.5px">2</div>
<div class="pg" style="left:733px;width:16px">3</div>
<div class="pg" style="left:761px;width:16px">4</div>
<div class="pg" style="left:788px;width:16px">5</div>
<div class="pg" style="left:816px;width:16px">6</div>

<div id="det">
  <div class="h1">156-1</div>
  <div class="date">01/27/2025 16:21 PM</div>
  <div id="cust"><div class="n">Vu Promo, inc</div>
    <svg width="12" height="7" viewBox="0 0 12 7" style="position:absolute;left:283px;top:17px"><path d="M1 6 L6 1 L11 6" fill="none" stroke="#9a9ea6" stroke-width="1.2"/></svg>
    <div class="kv" style="left:12px;top:44.2px"><span class="k">Main User</span><span class="v" style="left:100px">Order email</span></div>
    <div class="kv" style="left:12px;top:66px"><span class="k">Phone</span><span class="v" style="left:100px">+1 (305) 888-</span></div>
    <div class="kv" style="left:12px;top:87.2px"><span class="k">Email</span><span class="v" style="left:100px">orders@</span></div>
  </div>
  <div class="kv" style="left:11px;top:149.8px"><span class="k">User:</span><span class="v" style="left:108.5px">Order email</span></div>
  <div class="kv" style="left:11px;top:165.6px"><span class="k">Designer:</span><span class="v" style="left:108.5px">Anatoli</span></div>
  <div class="kv" style="left:11px;top:181.1px"><span class="k">PO:</span><span class="v" style="left:108.5px">PO1</span></div>
  <div class="sep" style="top:212px"></div>
  <div style="position:absolute;left:11px;top:231.5px;font-size:17.3px;letter-spacing:0.6px;font-weight:bold;color:#1d2437;white-space:nowrap">Fitted Table Covers All Sizes</div>
  <div class="kv" style="left:11px;top:261.8px"><span class="k">Size</span><span class="v" style="left:108.5px">8Ft 4 Sided</span></div>
  <div class="kv" style="left:11px;top:277.3px"><span class="k">Packing</span><span class="v" style="left:108.5px">Polyethylene Bag</span></div>
  <div class="kv" style="left:11px;top:292.8px"><span class="k">Turnaround time</span><span class="v" style="left:108.5px">3 Days Standard</span></div>
  <div class="kv" style="left:11px;top:308.3px"><span class="k">How Many</span><span class="v" style="left:108.5px">10</span></div>
  <div class="sep" style="top:340px"></div>
  <div class="kv" style="left:11px;top:360px"><span class="k">Shipping Address:</span></div>
  <div class="kv" style="left:146px;top:358.6px;line-height:15.6px"><span class="v" style="left:0">Attn: JetFuel Studio<br>1601 Tchoupitoulas St<br>New Orleans<br>LA<br>70130<br>US</span></div>
  <div class="kv" style="left:11px;top:465.5px"><span class="k">Shipping Method:</span><span class="v" style="left:135px">UPS 2nd Day Air&reg;</span></div>
  <div class="kv" style="left:11px;top:493px"><span class="k">Tracking ID:</span><span class="v" style="left:135px">-</span></div>
  <div class="kv" style="left:11px;top:520.5px"><span class="k">Uploaded Files:</span></div>
  <svg width="73" height="60" viewBox="0 0 73 60" style="position:absolute;left:147px;top:519.5px">
    <rect x="0" y="0" width="73" height="60" fill="#fff"/>
    <rect x="1" y="2" width="24" height="0.9" fill="#888"/><rect x="1" y="4.3" width="20" height="0.6" fill="#bbb"/><rect x="1" y="6.3" width="12" height="1" fill="#aaa"/>
    <rect x="35" y="2" width="5" height="1.8" fill="#5ab0ee"/><rect x="41" y="2.3" width="12" height="0.8" fill="#999"/>
    <rect x="35" y="5" width="5" height="1.8" fill="#f4ce5a"/><rect x="41" y="5.3" width="9" height="0.8" fill="#999"/><rect x="51" y="5.3" width="12" height="0.8" fill="#f0a0a0"/>
    <rect x="13.5" y="8.5" width="45" height="41" fill="#1b2450"/>
    <rect x="0" y="22" width="73" height="14" fill="#1b2450"/>
    <ellipse cx="35" cy="40.5" rx="2.2" ry="1.2" fill="#e6e8ef"/><rect x="30" y="42.5" width="11" height="2" fill="#aab" opacity="0.8"/>
    <rect x="14" y="51" width="16" height="1.5" fill="#f0c8c8"/><rect x="36" y="51.5" width="10" height="3" fill="#f0e2b8"/><rect x="47" y="51.5" width="10" height="3" fill="#f2dcc8"/>
  </svg>
  <div style="position:absolute;left:146px;top:581px;font-size:10.3px;letter-spacing:0.33px;color:#3d6fd6;text-decoration:underline;text-decoration-thickness:0.6px;text-underline-offset:1px;white-space:nowrap">156-1-new_601be969.pdf</div>
</div>
<div id="dscroll"></div>
<div id="dthumb"></div>

</body></html>
